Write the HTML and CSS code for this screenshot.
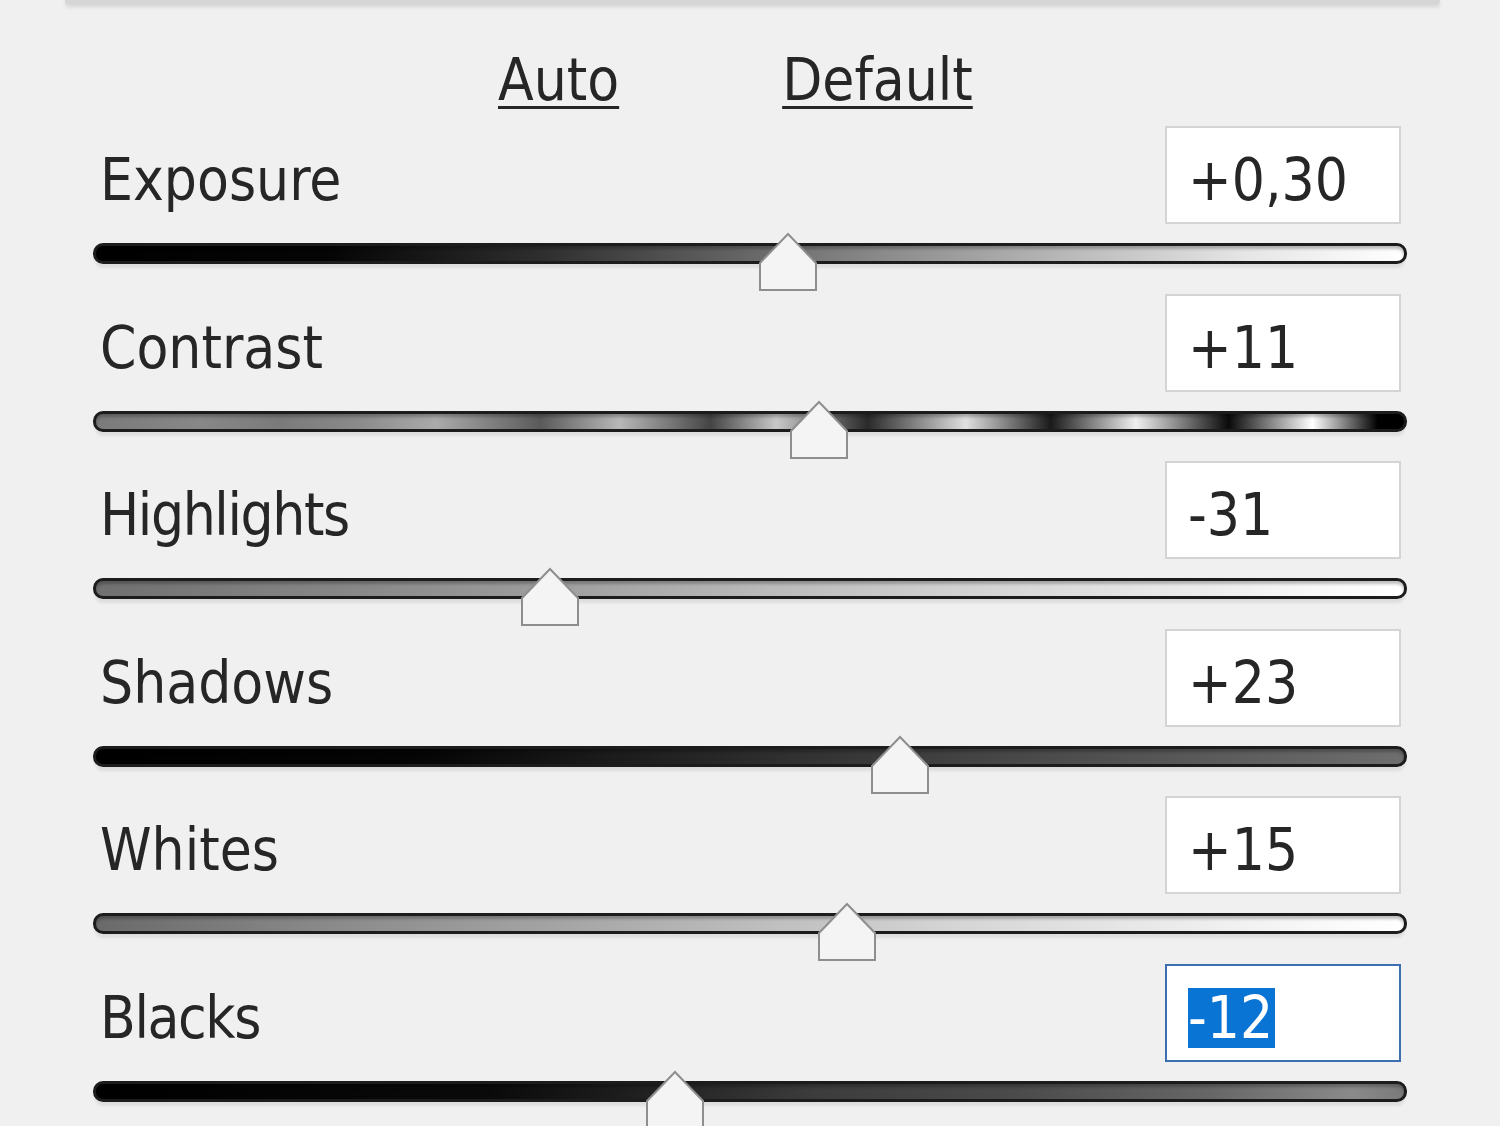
FILE: index.html
```html
<!DOCTYPE html>
<html>
<head>
<meta charset="utf-8">
<link rel="stylesheet" href="styles.css">
</head>
<body>
<div class="topbar"></div>
<div class="links">
  <span class="link link-auto">Auto</span>
  <span class="link link-default">Default</span>
</div>
<div class="panel">
  <div class="row">
    <div class="head"><span class="label">Exposure</span><span class="value">+0,30</span></div>
    <div class="track track-exposure"><svg class="thumb" style="left: 52.9%" viewBox="0 0 58 58"><polygon points="29,1 57,30 57,57 1,57 1,30"/></svg></div>
  </div>
  <div class="row">
    <div class="head"><span class="label">Contrast</span><span class="value">+11</span></div>
    <div class="track track-contrast"><svg class="thumb" style="left: 55.3%" viewBox="0 0 58 58"><polygon points="29,1 57,30 57,57 1,57 1,30"/></svg></div>
  </div>
  <div class="row">
    <div class="head"><span class="label label-tight">Highlights</span><span class="value">-31</span></div>
    <div class="track track-highlights"><svg class="thumb" style="left: 34.7%" viewBox="0 0 58 58"><polygon points="29,1 57,30 57,57 1,57 1,30"/></svg></div>
  </div>
  <div class="row">
    <div class="head"><span class="label">Shadows</span><span class="value">+23</span></div>
    <div class="track track-shadows"><svg class="thumb" style="left: 61.5%" viewBox="0 0 58 58"><polygon points="29,1 57,30 57,57 1,57 1,30"/></svg></div>
  </div>
  <div class="row">
    <div class="head"><span class="label">Whites</span><span class="value">+15</span></div>
    <div class="track track-whites"><svg class="thumb" style="left: 57.4%" viewBox="0 0 58 58"><polygon points="29,1 57,30 57,57 1,57 1,30"/></svg></div>
  </div>
  <div class="row">
    <div class="head"><span class="label label-tight">Blacks</span><span class="value value-active"><span class="sel">-12</span></span></div>
    <div class="track track-blacks"><svg class="thumb" style="left: 44.3%" viewBox="0 0 58 58"><polygon points="29,1 57,30 57,57 1,57 1,30"/></svg></div>
  </div>
</div>
</body>
</html>
```

FILE: styles.css
```css
html, body {
  margin: 0;
  padding: 0;
}
body {
  background: #f0f0f0;
  width: 1500px;
  height: 1126px;
  overflow: hidden;
  font-family: "DejaVu Sans Condensed", "DejaVu Sans", sans-serif;
  font-stretch: condensed;
  font-size: 58px;
  line-height: 58px;
  color: #262626;
}
.topbar {
  height: 5px;
  margin: 0 60px 0 65px;
  background: #d6d6d6;
  border-radius: 0 0 4px 4px;
  box-shadow: 0 2px 4px rgba(0,0,0,0.12);
}
.links {
  display: flex;
  padding: 46px 0 0 498px;
  height: 75px;
}
.link {
  text-decoration: underline;
  text-decoration-thickness: 3px;
  text-underline-offset: 6px;
}
.link-default {
  margin-left: 163px;
}
.panel {
  display: flex;
  flex-direction: column;
  padding-left: 93px;
  width: 1314px;
}
.row {
  height: 167.6px;
  display: flex;
  flex-direction: column;
}
.head {
  display: flex;
  justify-content: space-between;
  align-items: flex-start;
  height: 98px;
}
.label {
  margin: 25px 0 0 7px;
}
.label-tight {
  letter-spacing: -1.4px;
}
.value {
  box-sizing: border-box;
  width: 236px;
  height: 98px;
  margin-right: 6px;
  padding: 23px 0 0 21px;
  background: #fff;
  border: 2px solid #d4d4d4;
}
.value-active {
  border-color: #3d6fb0;
}
.sel {
  display: inline-block;
  background: #0a74d4;
  color: #fff;
  line-height: 60px;
  margin-top: -5px;
  padding-right: 2px;
}
.track {
  position: relative;
  box-sizing: border-box;
  margin-top: 19px;
  height: 21px;
  border: 3px solid #1c1c1c;
  border-radius: 10px;
  box-shadow: 0 6px 3px -2px rgba(0,0,0,0.08), inset 0 3px 3px rgba(0,0,0,0.25);
}
.track-exposure {
  background: linear-gradient(to right, #000 0%, #050505 18%, #2e2e2e 34%, #606060 48%, #8a8a8a 60%, #b8b8b8 74%, #e6e6e6 88%, #fff 100%);
}
.track-contrast {
  background: linear-gradient(to right, #7a7a7a 0%, #888 8%, #7a7a7a 14%, #8a8a8a 20%, #aaa 26%, #5a5a5a 34%, #b8b8b8 40%, #444 47%, #c8c8c8 52%, #2a2a2a 59%, #e0e0e0 66.5%, #1a1a1a 73%, #f0f0f0 79.5%, #0a0a0a 86.6%, #fff 93%, #000 98%);
}
.track-highlights {
  background: linear-gradient(to right, #707070 0%, #888 20%, #9e9e9e 35%, #b8b8b8 50%, #d0d0d0 65%, #e6e6e6 80%, #fafafa 95%, #fff 100%);
}
.track-shadows {
  background: linear-gradient(to right, #000 0%, #050505 25%, #1c1c1c 40%, #333 55%, #484848 70%, #5a5a5a 85%, #6e6e6e 100%);
}
.track-whites {
  background: linear-gradient(to right, #6a6a6a 0%, #8a8a8a 18%, #a4a4a4 35%, #bcbcbc 50%, #d4d4d4 65%, #e8e8e8 80%, #fafafa 95%, #fff 100%);
}
.track-blacks {
  background: linear-gradient(to right, #000 0%, #0a0a0a 30%, #262626 45%, #3c3c3c 55%, #4a4a4a 70%, #666 85%, #8a8a8a 96%, #7a7a7a 100%);
}
.thumb {
  position: absolute;
  top: -13px;
  width: 58px;
  height: 58px;
  margin-left: -29px;
  overflow: visible;
}
.thumb polygon {
  fill: #f4f4f4;
  stroke: #8e8e8e;
  stroke-width: 2;
}
```
